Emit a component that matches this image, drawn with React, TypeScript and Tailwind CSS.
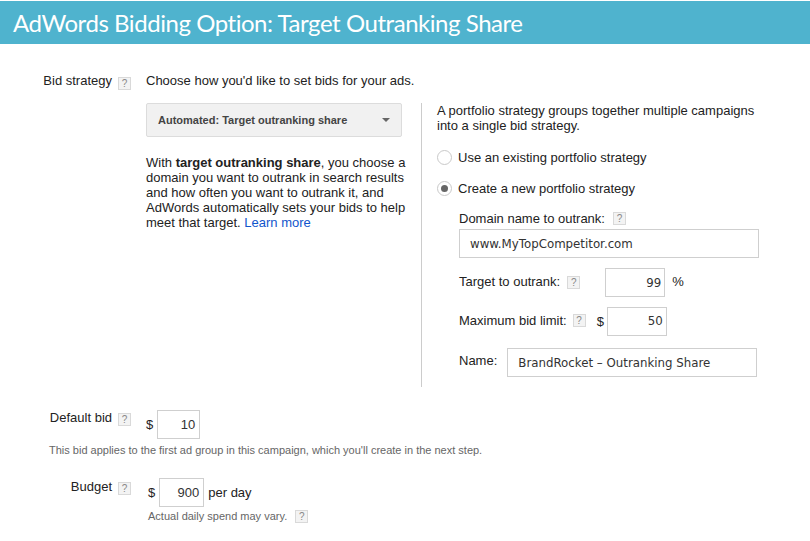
const sans = "font-['Liberation_Sans',Arial,sans-serif]";
const mono = "font-['DejaVu_Sans',sans-serif] text-[11.8px]";
const plain = "font-['Liberation_Sans',Arial,sans-serif] text-[13px]";

function Help({ className = "" }: { className?: string }) {
  return (
    <span className={`flex h-[13px] w-[13px] shrink-0 items-center justify-center border border-[#d9d9d9] bg-[#f3f3f3] text-[10px] leading-none text-[#888] ${className}`}>
      ?
    </span>
  );
}

function Field({ value, className = "", font = mono }: { value: string; className?: string; font?: string }) {
  return (
    <div className={`flex shrink-0 items-center border border-[#cfcfcf] bg-white text-[#333] ${font} ${className}`}>
      {value}
    </div>
  );
}

function Radio({ checked = false }: { checked?: boolean }) {
  return (
    <span className="flex h-[15px] w-[15px] shrink-0 items-center justify-center rounded-full border border-[#c9c9c9] bg-white">
      {checked && <span className="h-[7px] w-[7px] rounded-full bg-[#666]" />}
    </span>
  );
}

export default function App() {
  return (
    <div className={`h-[541px] w-[810px] overflow-hidden bg-white pt-px text-[13px] leading-[15px] text-[#222] ${sans}`}>
      <header className="flex h-[43px] items-center bg-[#4fb3ce] pl-[13px] font-['Lato',sans-serif] text-[24px] tracking-[-0.45px] text-white">
        AdWords Bidding Option: Target Outranking Share
      </header>

      <section className="mt-[28px] flex">
        <div className="flex w-[146px] shrink-0 items-start justify-end gap-[6px] pr-[15px] pt-[1px]">
          <span>Bid strategy</span>
          <Help className="mt-[4px]" />
        </div>
        <div>
          <p className="mb-[15px] mt-[1px]">Choose how you'd like to set bids for your ads.</p>
          <div className="flex">
            <div className="w-[275px] shrink-0">
              <div className="flex h-[34px] w-[256px] items-center justify-between rounded-[2px] border border-[#dcdcdc] bg-[#f1f1f1] pl-[11px] pr-[11px] text-[11px] font-bold text-[#444]">
                <span>Automated: Target outranking share</span>
                <span className="h-0 w-0 border-x-[4px] border-t-[4px] border-x-transparent border-t-[#666]" />
              </div>
              <p className="mt-[18px] w-[262px] leading-[15px]">
                With <b>target outranking share</b>, you choose a domain you want to outrank in search results and how often you want to outrank it, and AdWords automatically sets your bids to help meet that target. <span className="text-[#1155cc]">Learn more</span>
              </p>
            </div>
            <div className="h-[284px] w-[344px] shrink-0 border-l border-[#cccccc] pl-[15px]">
              <p className="leading-[15px]">A portfolio strategy groups together multiple campaigns<br />into a single bid strategy.</p>
              <label className="mt-[17px] flex items-center gap-[6px]"><Radio /><span>Use an existing portfolio strategy</span></label>
              <label className="mt-[16px] flex items-center gap-[6px]"><Radio checked /><span>Create a new portfolio strategy</span></label>
              <div className="ml-[22px] mt-[15px]">
                <div className="flex items-center gap-[8px]"><span>Domain name to outrank:</span><Help /></div>
                <Field value="www.MyTopCompetitor.com" className="mt-[3px] h-[29px] w-[300px] pl-[10px] pt-[1px]" />
                <div className="mt-[10px] flex h-[29px] items-center">
                  <span className="mb-[2px]">Target to outrank:</span>
                  <Help className="ml-[7px]" />
                  <Field value="99" className="ml-[25px] h-[29px] w-[60px] justify-end pr-[3px] pt-[1px]" />
                  <span className="mb-[2px] ml-[7px]">%</span>
                </div>
                <div className="mt-[10px] flex h-[29px] items-center">
                  <span className="mb-[2px]">Maximum bid limit:</span>
                  <Help className="mb-[2px] ml-[6px]" />
                  <span className="ml-[11px]">$</span>
                  <Field value="50" className="ml-[3px] h-[29px] w-[60px] justify-end pr-[3px]" />
                </div>
                <div className="mt-[12px] flex items-center">
                  <span className="mb-[4px]">Name:</span>
                  <Field value="BrandRocket – Outranking Share" className="ml-[10px] h-[29px] w-[250px] pl-[10px] pt-[1px]" />
                </div>
              </div>
            </div>
          </div>
        </div>
      </section>

      <section className="mt-[23px] flex">
        <div className="flex w-[146px] shrink-0 items-start justify-end gap-[6px] pr-[15px]">
          <span>Default bid</span>
          <Help className="mt-[3px]" />
        </div>
        <div className="flex items-center">
          <span>$</span>
          <Field value="10" font={plain} className="ml-[4px] h-[29px] w-[43px] justify-end pr-[4px]" />
        </div>
      </section>
      <p className="ml-[49px] mt-[5px] text-[11px] leading-[13px] text-[#666]">This bid applies to the first ad group in this campaign, which you'll create in the next step.</p>

      <section className="mt-[21px] flex">
        <div className="flex w-[148px] shrink-0 items-start justify-end gap-[6px] pr-[17px] pt-[1px]">
          <span>Budget</span>
          <Help className="mt-[3px]" />
        </div>
        <div>
          <div className="flex items-center">
            <span>$</span>
            <Field value="900" font={plain} className="ml-[4px] h-[29px] w-[45px] justify-end pr-[4px]" />
            <span className="ml-[4px]">per day</span>
          </div>
          <div className="mt-[2px] flex items-center gap-[8px] text-[11px] text-[#666]">
            <span>Actual daily spend may vary.</span>
            <Help />
          </div>
        </div>
      </section>
    </div>
  );
}
